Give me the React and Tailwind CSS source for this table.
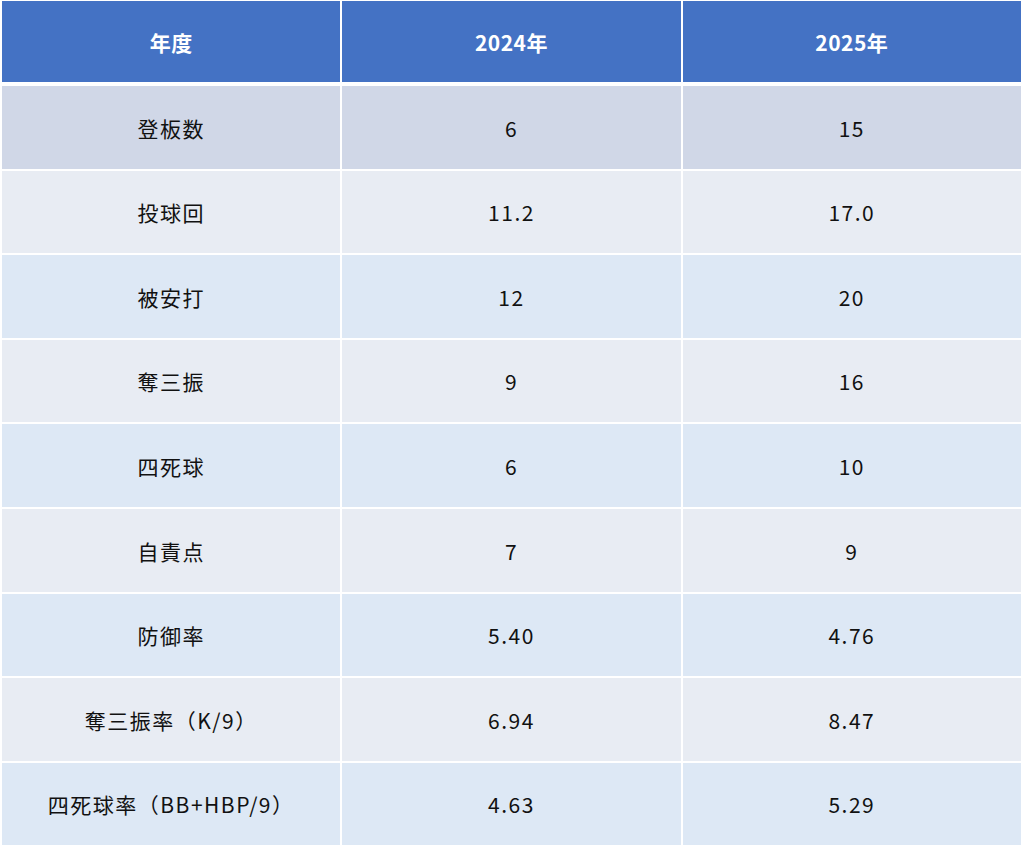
const rows = [
  ['登板数', '6', '15'],
  ['投球回', '11.2', '17.0'],
  ['被安打', '12', '20'],
  ['奪三振', '9', '16'],
  ['四死球', '6', '10'],
  ['自責点', '7', '9'],
  ['防御率', '5.40', '4.76'],
  ['奪三振率（K/9）', '6.94', '8.47'],
  ['四死球率（BB+HBP/9）', '4.63', '5.29'],
];

const bands = ['bg-[#d0d7e7]', 'bg-[#e8ecf3]', 'bg-[#dde8f5]', 'bg-[#e8ecf3]', 'bg-[#dde8f5]', 'bg-[#e8ecf3]', 'bg-[#dde8f5]', 'bg-[#e8ecf3]', 'bg-[#dde8f5]'];

export default function App() {
  return (
    <div
      className="w-[1024px] h-[847px] bg-white pl-[2px] pt-[1px] pr-[3px]"
      style={{ fontFamily: '"Noto Sans CJK JP", "Noto Sans", sans-serif' }}
    >
      <div className="grid grid-cols-3 gap-x-[2px] h-[81px] text-white font-bold text-[21px] tracking-[0.5px]">
        {['年度', '2024年', '2025年'].map((h) => (
          <div key={h} className="bg-[#4472c4] flex items-center justify-center pt-[3px]">
            {h}
          </div>
        ))}
      </div>
      <div className="flex flex-col gap-[2px] mt-[4px]">
        {rows.map((r, i) => (
          <div key={r[0]} className="grid grid-cols-3 gap-x-[2px] h-[82.6px] text-[21px] tracking-[1.5px] text-[#111]">
            {r.map((c, j) => (
              <div key={j} className={`${bands[i]} flex items-center justify-center pt-[2px]`}>
                {c}
              </div>
            ))}
          </div>
        ))}
      </div>
    </div>
  );
}
